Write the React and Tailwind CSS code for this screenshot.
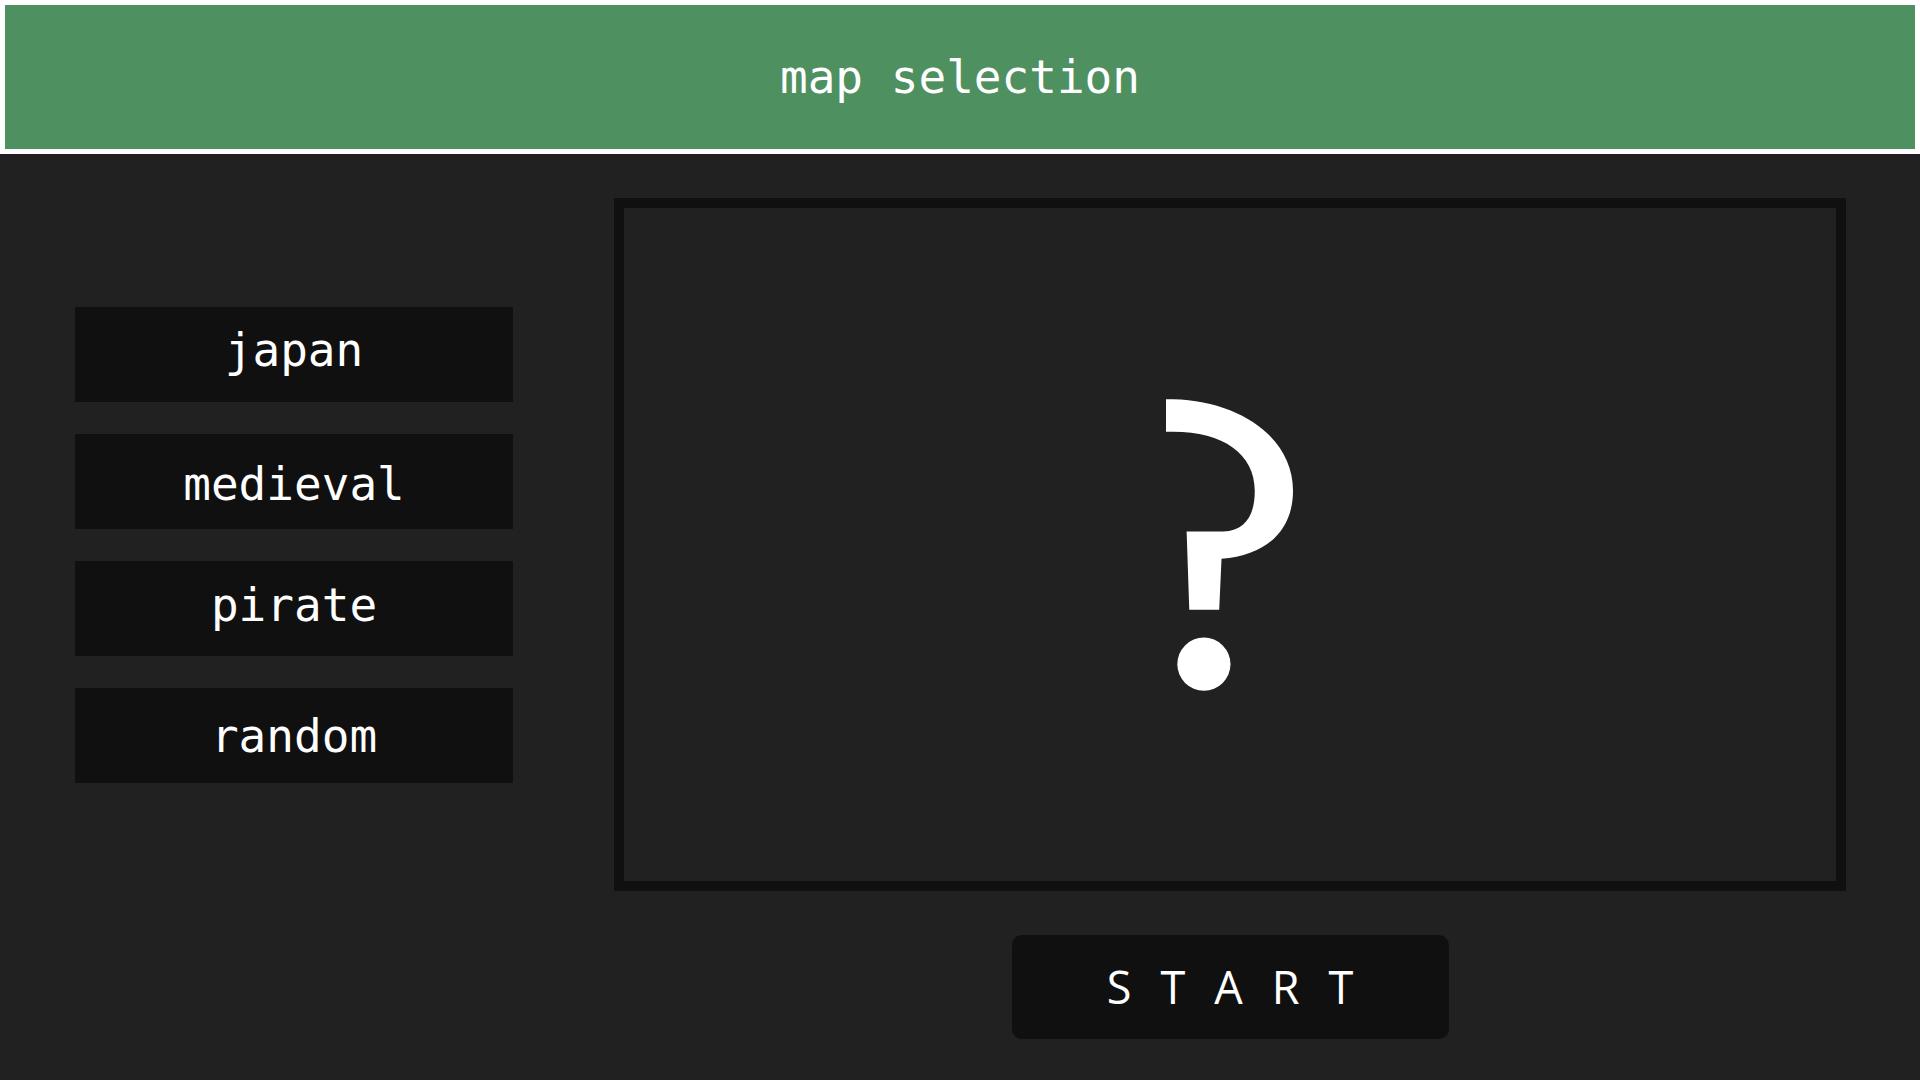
export default function App() {
  const items = [
    { t: "japan", c: "pb-[7px]" },
    { t: "medieval", c: "pt-[7px]" },
    { t: "pirate", c: "pb-[5px]" },
    { t: "random", c: "pt-[3px]" },
  ];
  return (
    <div className="w-[1920px] h-[1080px] bg-[#212121] flex flex-col overflow-hidden">
      <div className="h-[154px] bg-white pt-[5px] px-[5px] pb-[5px] shrink-0">
        <div className="h-full bg-[#4e9060] flex items-center justify-center">
          <span
            className="text-white text-[46px] leading-none"
            style={{ fontFamily: '"DejaVu Sans Mono", monospace' }}
          >
            map selection
          </span>
        </div>
      </div>
      <div className="flex flex-row pl-[75px] pt-[44px]">
        <div className="w-[438px] h-[693px] flex flex-col justify-center gap-[32px]">
          {items.map((it) => (
            <div
              key={it.t}
              className={
                "h-[95px] bg-[#101010] flex items-center justify-center text-white text-[46px] " +
                it.c
              }
              style={{ fontFamily: '"DejaVu Sans Mono", monospace' }}
            >
              {it.t}
            </div>
          ))}
        </div>
        <div className="ml-[101px] flex flex-col">
          <div className="w-[1232px] h-[693px] border-[10px] border-[#101010] flex items-center justify-center">
            <svg
              width="127"
              height="292"
              viewBox="78 55 382 877"
              className="ml-[-1px]"
            >
              <path
                d="M78,55 L100,55 C300,60 460,170 460,330 C460,450 380,525 245,535 L238,688 L148,688 L140,453 L250,453 C320,450 345,400 345,330 C345,220 250,153 100,153 L78,153 Z"
                fill="#ffffff"
              />
              <circle cx="192" cy="852" r="80" fill="#ffffff" />
            </svg>
          </div>
          <div className="mt-[44px] flex justify-center">
            <div
              className="w-[437px] h-[104px] bg-[#101010] rounded-[10px] flex items-center justify-center text-white text-[45px] tracking-[29px] pl-[29px]"
              style={{ fontFamily: '"Open Sans", sans-serif' }}
            >
              START
            </div>
          </div>
        </div>
      </div>
    </div>
  );
}
